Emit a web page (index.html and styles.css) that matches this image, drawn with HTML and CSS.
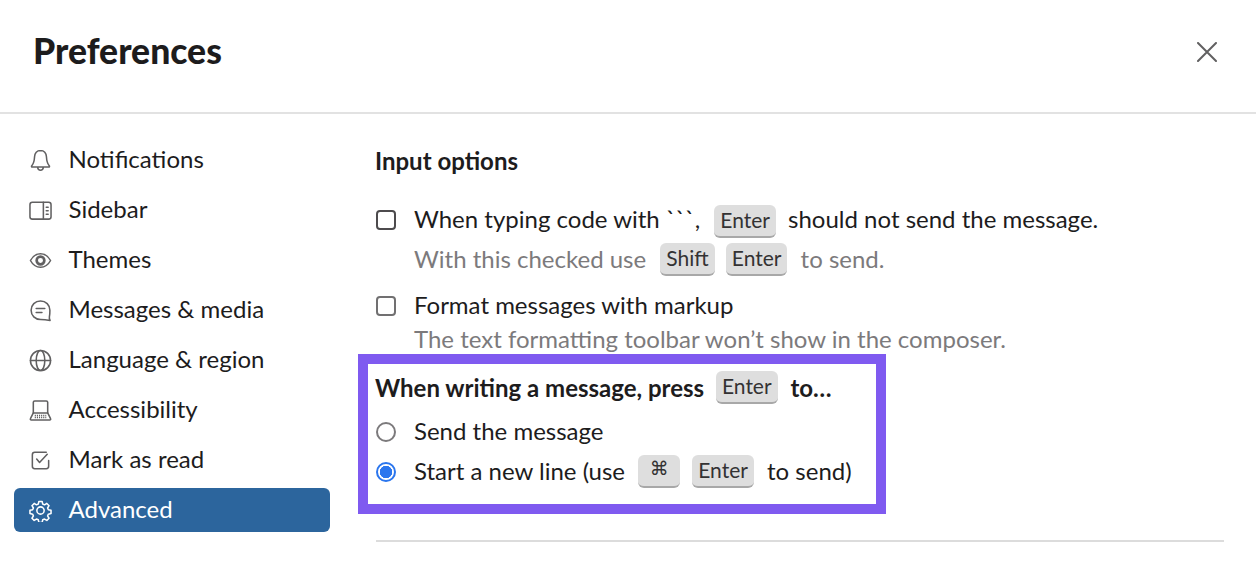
FILE: index.html
```html
<!DOCTYPE html>
<html lang="en">
<head>
<meta charset="utf-8">
<title>Preferences</title>
<link rel="stylesheet" href="styles.css">
</head>
<body>
<div class="dialog">
  <header class="head">
    <h1 class="title">Preferences</h1>
    <button class="close" aria-label="Close">
      <svg viewBox="0 0 20 20" width="20" height="20"><path d="M1 1L19 19M19 1L1 19" fill="none" stroke="#616061" stroke-width="2" stroke-linecap="round"/></svg>
    </button>
  </header>
  <div class="body">
    <nav class="nav">
      <a class="item"><svg class="ico" viewBox="0 0 24 24"><path d="M12 1.500c-3.800 0-6 3-6.200 6.600-.2 4-.6 6.800-2.900 9.300-.6.7-.3 1.400.6 1.400h17c.9 0 1.200-.7.6-1.400-2.300-2.500-2.700-5.300-2.900-9.300C18 4.500 15.800 1.500 12 1.500zM9 19c.2 2 1.400 3.200 3 3.200s2.800-1.200 3-3.200" /></svg><span>Notifications</span></a>
      <a class="item"><svg class="ico" viewBox="0 0 24 24"><rect x="1" y="3.500" width="22" height="17.500" rx="2.500"/><path d="M15 3.500v17.500M18 8.500h2M18 12.200h2M18 16h2"/></svg><span>Sidebar</span></a>
      <a class="item"><svg class="ico" viewBox="0 0 24 24"><path d="M1.500 12c2.500-4.600 6-7 10.500-7s8 2.400 10.500 7c-2.500 4.600-6 7-10.500 7S4 16.600 1.500 12z"/><circle cx="12" cy="12" r="4" stroke-width="2.800"/></svg><span>Themes</span></a>
      <a class="item"><svg class="ico" viewBox="0 0 24 24"><path d="M12 2c-5.600 0-9.800 4.200-9.800 9.700s4.200 9.700 9.800 9.700c3 0 6.200.3 10 1-.8-1.500-1-2.700-.7-4 .4-1.900.5-3.600.5-6.700C21.800 6.200 17.600 2 12 2z"/><path d="M7.500 9.800h9M7.500 14h6"/></svg><span>Messages &amp; media</span></a>
      <a class="item"><svg class="ico" viewBox="0 0 24 24"><circle cx="12" cy="12" r="10.500"/><ellipse cx="12" cy="12" rx="4.500" ry="10.500"/><path d="M1.500 12h21"/></svg><span>Language &amp; region</span></a>
      <a class="item"><svg class="ico" viewBox="0 0 24 24"><path d="M4.500 14.500V3.500A1.500 1.500 0 0 1 6 2h12a1.500 1.500 0 0 1 1.500 1.500v11"/><path d="M4.500 14.500h15L22.500 20.500a1 1 0 0 1-1 1.500H2.500a1 1 0 0 1-1-1.500z"/><path d="M6 17.200h12M6 19.400h12" stroke-dasharray="1.200 1" stroke-linecap="butt"/></svg><span>Accessibility</span></a>
      <a class="item"><svg class="ico" viewBox="0 0 24 24"><path d="M18 3.500H6A2.500 2.500 0 0 0 3.500 6v12A2.500 2.500 0 0 0 6 20.500h12a2.500 2.500 0 0 0 2.500-2.500v-6"/><path d="M8 10.500l3 3.500 8-8.500"/></svg><span>Mark as read</span></a>
      <a class="item active"><svg class="ico" viewBox="0 0 24 24"><path d="M10.300 2.500h3.400l.6 2.800 1.900.8 2.400-1.500 2.300 2.400-1.500 2.400.8 1.800 2.800.6v3.400l-2.800.6-.8 1.900 1.500 2.400-2.300 2.300-2.400-1.500-1.900.8-.6 2.800h-3.400l-.6-2.800-1.900-.8-2.400 1.500-2.300-2.300 1.500-2.400-.8-1.900-2.800-.6v-3.400l2.800-.6.800-1.800-1.500-2.400 2.300-2.400 2.400 1.500 1.900-.8z"/><circle cx="12" cy="12" r="3.800"/></svg><span>Advanced</span></a>
    </nav>
    <main class="main">
      <h2 class="heading">Input options</h2>
      <div class="option first">
        <span class="check"></span>
        <div>
          <div class="line line-up">When typing code with ```, <kbd class="key">Enter</kbd> should not send the message.</div>
          <div class="hint hint-keys">With this checked use <kbd class="key">Shift</kbd> <kbd class="key">Enter</kbd> to send.</div>
        </div>
      </div>
      <div class="option second">
        <span class="check"></span>
        <div>
          <div class="line line-plain">Format messages with markup</div>
          <div class="hint hint-last">The text formatting toolbar won’t show in the composer.</div>
        </div>
      </div>
      <section class="box">
        <div class="box-title">When writing a message, press <kbd class="key">Enter</kbd> to…</div>
        <div class="radio-row"><span class="radio"></span><span class="line">Send the message</span></div>
        <div class="radio-row"><span class="radio on"></span><span class="line">Start a new line (use <kbd class="key cmd"><span class="cmd-glyph">⌘</span></kbd> <kbd class="key">Enter</kbd> to send)</span></div>
      </section>
      <hr class="rule">
    </main>
  </div>
</div>
</body>
</html>
```

FILE: styles.css
```css
html, body { margin: 0; padding: 0; background: #fff; }
body { width: 1256px; height: 580px; overflow: hidden; font-family: Lato, "Liberation Sans", sans-serif; color: #1d1c1d; }
.dialog { display: flex; flex-direction: column; height: 580px; }
.head { display: flex; align-items: center; justify-content: space-between; height: 112px; padding: 0 38px 0 33px; border-bottom: 2px solid #e2e2e2; }
.title { margin: 0 0 10px; font-size: 35.500px; font-weight: 900; line-height: 44px; }
.close { width: 22px; height: 22px; padding: 0; border: 0; background: none; display: flex; align-items: center; justify-content: center; margin-bottom: 8px; }
.body { display: flex; flex: 1; }
.nav { width: 316px; margin: 24px 0 0 14px; display: flex; flex-direction: column; gap: 6px; }
.item { height: 44px; display: flex; align-items: center; gap: 16.500px; padding-left: 15px; font-size: 24px; color: #1d1c1d; border-radius: 6px; }
.item span { margin-top: -3px; }
.ico { width: 23px; height: 23px; fill: none; stroke: #616061; stroke-width: 1.600; stroke-linejoin: round; stroke-linecap: round; flex: none; }
.active { background: #2c659d; color: #fff; }
.active .ico { stroke: #fff; }
.main { margin-left: 28px; width: 866px; padding: 31px 0 0 18px; box-sizing: border-box; display: flex; flex-direction: column; }
.heading { margin: 0 0 0 -1px; font-size: 24px; font-weight: 700; line-height: 32px; }
.option { display: flex; gap: 18px; }
.first { margin-top: 22px; }
.second { margin-top: 8px; }
.check { width: 20px; height: 20px; border: 2px solid #4d4b4d; border-radius: 4px; box-sizing: border-box; flex: none; margin-top: 11px; }
.second .check { margin-top: 9px; border-color: #717071; }
.line { font-size: 24px; line-height: 40px; }
.line-plain { line-height: 36px; }
.hint { font-size: 24px; line-height: 30px; color: #7c7a7c; }
.hint-keys { line-height: 40px; }
.hint-last { padding-top: 1px; }
.key { display: inline-block; font-family: Lato, "Liberation Sans", sans-serif; font-size: 21px; font-weight: 400; line-height: 30px; height: 33px; margin: -8px 6px -8px 8px; padding: 0 6px; background: #dedede; border-radius: 6px; border-bottom: 2px solid #a8a8a8; box-sizing: border-box; color: #333233; vertical-align: 2px; }
.key + .key { margin: -8px 7px -8px -1px; }
.line-up .key { vertical-align: 0; }
.box { margin-left: -18px; width: 528px; height: 160px; box-sizing: border-box; border: 10px solid #7f5af0; padding: 4px 8px 0; }
.box-title { margin: 0 0 4px -1px; font-size: 24px; font-weight: 700; line-height: 40px; }
.box-title .key { margin: -8px 7px -8px 6px; vertical-align: 3px; }
.radio-row { display: flex; align-items: center; gap: 18px; height: 40px; }
.radio-row .line { margin-top: -2px; }
.radio { width: 20px; height: 20px; border: 2px solid #7c7a7c; border-radius: 50%; box-sizing: border-box; flex: none; }
.radio.on { border: 2px solid #2b76ee; background: radial-gradient(circle, #2b76ee 0 6px, #fff 6.500px); }
.cmd { width: 42px; padding: 0; margin-left: 7px; margin-right: 7px; text-align: center; }
.cmd-glyph { font-family: "DejaVu Sans", sans-serif; font-size: 19px; position: relative; top: -3px; }
.rule { width: 100%; margin: 26px 0 0; border: 0; border-top: 2px solid #dcdcdc; }
```
